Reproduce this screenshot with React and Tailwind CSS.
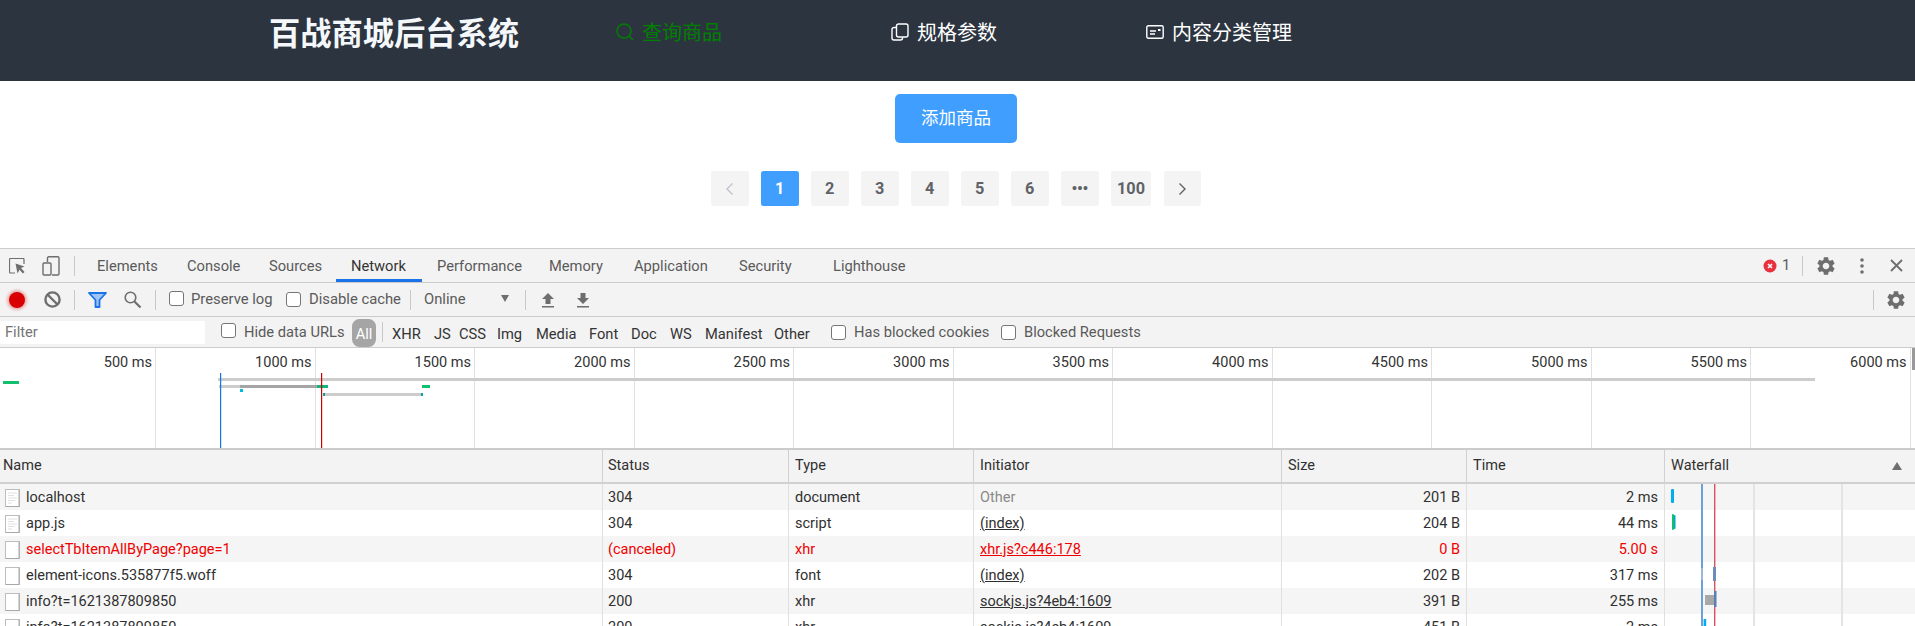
import { MdSettings } from 'react-icons/md';

const pages = ['1', '2', '3', '4', '5', '6'];
const scale = ['500 ms', '1000 ms', '1500 ms', '2000 ms', '2500 ms', '3000 ms', '3500 ms', '4000 ms', '4500 ms', '5000 ms', '5500 ms', '6000 ms'];
const rows = [
  { name: 'localhost', status: '304', type: 'document', init: 'Other', size: '201 B', time: '2 ms', lines: true },
  { name: 'app.js', status: '304', type: 'script', init: '(index)', size: '204 B', time: '44 ms', lines: true },
  { name: 'selectTbItemAllByPage?page=1', status: '(canceled)', type: 'xhr', init: 'xhr.js?c446:178', size: '0 B', time: '5.00 s', red: true },
  { name: 'element-icons.535877f5.woff', status: '304', type: 'font', init: '(index)', size: '202 B', time: '317 ms' },
  { name: 'info?t=1621387809850', status: '200', type: 'xhr', init: 'sockjs.js?4eb4:1609', size: '391 B', time: '255 ms' },
  { name: 'info?t=1621387809850', status: '200', type: 'xhr', init: 'sockjs.js?4eb4:1609', size: '451 B', time: '2 ms' },
];

const Sep = ({ className }) => <div className={`w-px h-[20px] bg-[#c8c8c8] shrink-0 ${className}`} />;
const Check = () => <input type="checkbox" readOnly className="appearance-none w-[15px] h-[15px] shrink-0 rounded-[3px] border border-[#767676] bg-white" />;
const Gear = ({ className }) => <MdSettings className={`text-[#6e6e6e] shrink-0 ${className}`} />;

function PageIcon({ lines }) {
  return (
    <svg width="15" height="18" viewBox="0 0 15 18" className="shrink-0">
      <rect x="0.5" y="0.5" width="14" height="17" fill="#fff" stroke="#bdbdbd" />
      <path d="M14 1v16.5H1" fill="none" stroke="#a8a8a8" strokeWidth="1" />
      {lines && <path d="M3 4h9M3 6.5h6M3 9h9M3 11.5h7M3 14h4" stroke="#e0e0e0" strokeWidth="1" />}
    </svg>
  );
}

function Nav() {
  return (
    <div className="h-[81px] bg-[#2c3440] flex items-center pb-[17px] pl-[269px] text-[20px] text-white font-['Noto_Sans_CJK_SC',sans-serif]">
      <div className="w-[347px] text-[31.25px] font-bold text-[#f5f8fb]">百战商城后台系统</div>
      <div className="w-[275px] flex items-center gap-[8px] text-[#008000]">
        <svg width="18" height="18" viewBox="0 0 18 18" fill="none" stroke="currentColor" strokeWidth="1.4">
          <circle cx="8" cy="8" r="7" /><path d="M13 13l4 4" />
        </svg>
        查询商品
      </div>
      <div className="w-[255px] flex items-center gap-[8px]">
        <svg width="18" height="18" viewBox="0 0 18 18" fill="none" stroke="currentColor" strokeWidth="1.4">
          <rect x="5.5" y="1" width="11.5" height="13" rx="2" />
          <path d="M5 4.5H3a2 2 0 0 0-2 2V15a2 2 0 0 0 2 2h6.5a2 2 0 0 0 2-2v-1" />
        </svg>
        规格参数
      </div>
      <div className="flex items-center gap-[8px]">
        <svg width="18" height="14" viewBox="0 0 18 14" fill="none" stroke="currentColor" strokeWidth="1.4">
          <rect x="0.8" y="0.8" width="16.4" height="12.4" rx="1.5" />
          <path d="M4 6h6M4 9h5" /><rect x="12" y="4" width="2.5" height="2" fill="currentColor" stroke="none" />
        </svg>
        内容分类管理
      </div>
    </div>
  );
}

function Content() {
  const cell = 'h-[35px] w-[37.5px] flex items-center justify-center rounded-[2.5px] bg-[#f4f4f5] text-[#606266] pt-[2px]';
  return (
    <div className="h-[167px] bg-white pr-[3px] font-['Noto_Sans_CJK_SC',sans-serif]">
      <div className="flex justify-center pt-[13px]">
        <button className="w-[122px] h-[49px] pb-[2px] rounded-[5px] bg-[#409eff] text-white text-[17.5px]">添加商品</button>
      </div>
      <div className="flex justify-center gap-[12.5px] mt-[28px] text-[16.25px] font-bold font-['Roboto',sans-serif]">
        <div className="h-[35px] w-[37.5px] flex items-center justify-center rounded-[2.5px] bg-[#f4f4f5] text-[#c0c4cc]">
          <svg width="9" height="14" viewBox="0 0 9 14" fill="none" stroke="currentColor" strokeWidth="1.4"><path d="M7.5 1.5L2 7l5.5 5.5" /></svg>
        </div>
        {pages.map((p) => (
          <div key={p} className={p === '1' ? 'h-[35px] w-[37.5px] flex items-center justify-center rounded-[2.5px] bg-[#409eff] text-white pt-[2px]' : cell}>{p}</div>
        ))}
        <div className={`${cell} tracking-tight`}>•••</div>
        <div className="h-[35px] w-[40px] flex items-center justify-center rounded-[2.5px] bg-[#f4f4f5] text-[#606266] pt-[2px]">100</div>
        <div className="h-[35px] w-[37.5px] flex items-center justify-center rounded-[2.5px] bg-[#f4f4f5] text-[#606266]">
          <svg width="9" height="14" viewBox="0 0 9 14" fill="none" stroke="currentColor" strokeWidth="1.4"><path d="M1.5 1.5L7 7l-5.5 5.5" /></svg>
        </div>
      </div>
    </div>
  );
}

function TabBar() {
  const tab = 'h-full flex items-center pl-[15px] border-b-[3px] border-transparent pt-[5px]';
  return (
    <div className="h-[34px] flex items-center pl-[9px] bg-[#f3f3f3] border-b border-[#cbcbcb] text-[14.7px] text-[#5a5a5a]">
      <svg width="16" height="16" viewBox="0 0 16 16" fill="none" className="shrink-0">
        <path d="M6 15H1.5a1 1 0 0 1-1-1V1.5a1 1 0 0 1 1-1H14a1 1 0 0 1 1 1V6" stroke="#6e6e6e" strokeWidth="1.2" />
        <path d="M6.5 5.5l9 3-3.5 1.6 3.5 3.9-1.6 1.6-3.4-3.9L8.5 15.5z" fill="#6e6e6e" />
      </svg>
      <svg width="18" height="20" viewBox="0 0 18 20" fill="none" className="ml-[17px] shrink-0" stroke="#6e6e6e" strokeWidth="1.4">
        <path d="M5.5 6V2a1.2 1.2 0 0 1 1.2-1.2h9.1A1.2 1.2 0 0 1 17 2v15.8a1.2 1.2 0 0 1-1.2 1.2H10" />
        <rect x="1" y="7" width="8" height="12" rx="1" />
      </svg>
      <Sep className="ml-[14px] mr-[7px]" />
      <div className={`${tab} w-[90px]`}>Elements</div>
      <div className={`${tab} w-[82px]`}>Console</div>
      <div className={`${tab} w-[82px]`}>Sources</div>
      <div className="h-full flex items-center pl-[15px] w-[86px] border-b-[3px] border-[#1a73e8] pt-[5px] text-[#333]">Network</div>
      <div className={`${tab} w-[112px]`}>Performance</div>
      <div className={`${tab} w-[85px]`}>Memory</div>
      <div className={`${tab} w-[105px]`}>Application</div>
      <div className={`${tab} w-[94px]`}>Security</div>
      <div className={`${tab} w-[100px]`}>Lighthouse</div>
      <div className="ml-auto flex items-center pr-[12px]">
        <svg width="14" height="14" viewBox="0 0 14 14" className="shrink-0">
          <circle cx="7" cy="7" r="6.5" fill="#e8303e" /><path d="M5 5l4 4M9 5l-4 4" stroke="#fff" strokeWidth="1.6" />
        </svg>
        <span className="ml-[5px] w-[20px]">1</span>
        <Sep />
        <Gear className="ml-[12px] w-[22px] h-[22px]" />
        <svg width="6" height="18" viewBox="0 0 6 18" className="ml-[22px] shrink-0" fill="#6e6e6e">
          <circle cx="3" cy="3" r="1.8" /><circle cx="3" cy="9" r="1.8" /><circle cx="3" cy="15" r="1.8" />
        </svg>
        <svg width="13" height="13" viewBox="0 0 13 13" className="ml-[25px] shrink-0" stroke="#6e6e6e" strokeWidth="1.8">
          <path d="M1 1l11 11M12 1L1 12" />
        </svg>
      </div>
    </div>
  );
}

function Toolbar() {
  return (
    <div className="h-[34px] flex items-center pl-[9px] pr-[8px] bg-[#f3f3f3] border-b border-[#cbcbcb] text-[14.8px] text-[#5a5a5a]">
      <div className="w-[16px] h-[16px] shrink-0 rounded-full bg-[#d80000] shadow-[0_0_3px_2px_rgba(216,0,0,0.3)]" />
      <svg width="17" height="17" viewBox="0 0 17 17" fill="none" stroke="#6e6e6e" strokeWidth="2.4" className="ml-[19px] shrink-0">
        <circle cx="8.5" cy="8.5" r="7.1" /><path d="M3.5 3.5l10 10" />
      </svg>
      <Sep className="ml-[13px]" />
      <svg width="19" height="16" viewBox="0 0 19 16" className="ml-[13px] shrink-0">
        <path d="M1 1h17l-6.5 7v7h-4V8z" fill="#9fc5f5" stroke="#1a73e8" strokeWidth="1.8" strokeLinejoin="round" />
      </svg>
      <svg width="18" height="17" viewBox="0 0 18 17" fill="none" stroke="#6e6e6e" strokeWidth="1.6" className="ml-[17px] shrink-0">
        <circle cx="6.5" cy="6.5" r="5.3" /><path d="M10.5 10.5l6 6" strokeWidth="2.2" />
      </svg>
      <Sep className="ml-[13px]" />
      <div className="ml-[13px]"><Check /></div>
      <span className="ml-[7px] w-[95px]">Preserve log</span>
      <Check />
      <span className="ml-[8px] w-[101px]">Disable cache</span>
      <Sep />
      <span className="ml-[13px] w-[77px]">Online</span>
      <div className="w-0 h-0 shrink-0 mb-[3px] border-x-[4.5px] border-x-transparent border-t-[7px] border-t-[#6e6e6e]" />
      <Sep className="ml-[16px]" />
      <svg width="14" height="16" viewBox="0 0 14 16" fill="#6e6e6e" className="ml-[15px] shrink-0">
        <path d="M7 1l6 6H9.5v5h-5V7H1zM1 14h12v1.5H1z" />
      </svg>
      <svg width="14" height="16" viewBox="0 0 14 16" fill="#6e6e6e" className="ml-[21px] shrink-0">
        <path d="M4.5 1h5v5H13l-6 6-6-6h3.5zM1 14h12v1.5H1z" />
      </svg>
      <Sep className="ml-auto mr-[11px]" />
      <Gear className="w-[22px] h-[22px]" />
    </div>
  );
}

function FilterBar() {
  return (
    <div className="h-[31px] flex items-center bg-[#f3f3f3] border-b border-[#cbcbcb] text-[14.7px] text-[#5a5a5a]">
      <input readOnly placeholder="Filter" className="w-[205px] h-[23px] bg-white pl-[5px] placeholder:text-[#757575] outline-none" />
      <div className="ml-[16px]"><Check /></div>
      <span className="ml-[8px] w-[108px] pt-[1px]">Hide data URLs</span>
      <div className="w-[24px] h-[28px] mt-[2px] rounded-[7.5px] bg-[#a5a5a5] text-white flex items-center justify-center pt-[3px]">All</div>
      <Sep className="ml-[6px] mr-[9px]" />
      <div className="flex items-center pt-[4px] text-[#333]">
        <span className="w-[42px]">XHR</span>
        <span className="w-[25px]">JS</span>
        <span className="w-[38px]">CSS</span>
        <span className="w-[39px]">Img</span>
        <span className="w-[53px]">Media</span>
        <span className="w-[42px]">Font</span>
        <span className="w-[39px]">Doc</span>
        <span className="w-[35px]">WS</span>
        <span className="w-[69px]">Manifest</span>
        <span className="w-[57px]">Other</span>
      </div>
      <Check />
      <span className="ml-[8px] w-[147px] pt-[1px]">Has blocked cookies</span>
      <Check />
      <span className="ml-[8px] pt-[1px]">Blocked Requests</span>
    </div>
  );
}

function Overview() {
  return (
    <div className="relative h-[100px] flex bg-white text-[14.5px] text-[#333] overflow-hidden">
      {scale.map((s, i) => (
        <div key={s} className={i === 0 ? 'w-[156px] shrink-0 border-r border-[#e0e0e0] text-right pr-[3px] pt-[8px]' : 'w-[159.5px] shrink-0 border-r border-[#e0e0e0] text-right pr-[3px] pt-[8px]'}>{s}</div>
      ))}
      <svg width="1915" height="100" viewBox="0 0 1915 100" className="absolute left-0 top-0">
        <rect x="218" y="30" width="1597" height="3" fill="#cccccc" />
        <rect x="3" y="33" width="16" height="3" fill="#10c06c" />
        <rect x="219" y="37" width="21" height="3" fill="#cccccc" />
        <rect x="240" y="37" width="77" height="3" fill="#a5a5a5" />
        <rect x="317" y="37" width="11" height="3" fill="#10b87a" />
        <rect x="422" y="37" width="8" height="3" fill="#10c06c" />
        <rect x="240" y="41" width="3" height="3" fill="#00b8d8" />
        <rect x="323" y="45" width="100" height="3" fill="#cccccc" />
        <rect x="323" y="45" width="2" height="3" fill="#10a090" />
        <rect x="421" y="45" width="2" height="3" fill="#10a0a0" />
        <rect x="220" y="25" width="1.2" height="75" fill="#1a73e8" />
        <rect x="321" y="25" width="1.2" height="75" fill="#d00000" />
        <rect x="1912" y="0" width="3" height="22" fill="#999999" />
      </svg>
    </div>
  );
}

function Table() {
  const cols = 'grid grid-cols-[603px_186px_185px_308px_185px_198px_1fr]';
  const head = 'h-full flex items-center pl-[6px] border-r border-[#d0d0d0]';
  return (
    <div className="relative h-[178px] overflow-hidden border-t-2 border-[#cbcbcb] text-[14.5px] text-[#303030]">
      <div className={`${cols} h-[34px] bg-[#f3f3f3] border-b-2 border-[#d0d0d0]`}>
        <div className="h-full flex items-center pl-[3px] border-r border-[#d0d0d0]">Name</div>
        <div className="h-full flex items-center pl-[5px] border-r border-[#d0d0d0]">Status</div>
        <div className={head}>Type</div>
        <div className={head}>Initiator</div>
        <div className={head}>Size</div>
        <div className={head}>Time</div>
        <div className="h-full flex items-center justify-between pl-[6px] pr-[13px]">
          Waterfall
          <div className="w-0 h-0 border-x-[5px] border-x-transparent border-b-[8px] border-b-[#6e6e6e]" />
        </div>
      </div>
      {rows.map((r, i) => {
        const cell = 'h-full flex items-center pl-[6px] pt-[2px] border-r border-[#e0e0e0]';
        const num = 'h-full flex items-center justify-end pr-[6px] pt-[2px] border-r border-[#e0e0e0]';
        return (
          <div key={i} className={`${cols} h-[26px] ${i % 2 === 0 ? 'bg-[#f5f5f5]' : 'bg-white'} ${r.red ? 'text-[#f00000]' : ''}`}>
            <div className="h-full flex items-center gap-[6px] pl-[5px] pt-[2px] border-r border-[#e0e0e0]">
              <PageIcon lines={r.lines} />
              <span>{r.name}</span>
            </div>
            <div className="h-full flex items-center pl-[5px] pt-[2px] border-r border-[#e0e0e0]">{r.status}</div>
            <div className={cell}>{r.type}</div>
            <div className={cell}>
              {r.init === 'Other' ? <span className="text-[#8a8a8a]">Other</span> : <span className="underline">{r.init}</span>}
            </div>
            <div className={num}>{r.size}</div>
            <div className={num}>{r.time}</div>
            <div />
          </div>
        );
      })}
      <svg width="250" height="142" viewBox="0 0 250 142" className="absolute right-0 top-[34px]">
        <rect x="88" y="0" width="2" height="142" fill="#e4e4e4" />
        <rect x="176" y="0" width="2" height="142" fill="#e4e4e4" />
        <rect x="36" y="0" width="2" height="142" fill="#6f9fd8" />
        <rect x="49" y="0" width="1.4" height="142" fill="#d9545a" />
        <rect x="6" y="5" width="3" height="14" rx="1" fill="#00aeef" />
        <rect x="7" y="30" width="2" height="16" rx="1" fill="#10c06c" />
        <rect x="9" y="31" width="1.5" height="14" rx="0.7" fill="#00a8c0" />
        <rect x="36" y="84" width="2" height="12" fill="#9cb8dc" />
        <rect x="48" y="83" width="3" height="14" fill="#6f8cb8" />
        <rect x="40" y="111" width="10" height="10" fill="#a8a8a8" />
        <rect x="49" y="107" width="2.5" height="16" fill="#5b7fb5" />
        <rect x="38.6" y="135" width="2.6" height="7" fill="#00aeef" />
      </svg>
    </div>
  );
}

export default function App() {
  return (
    <div className="w-[1915px] h-[626px] overflow-hidden bg-white">
      <Nav />
      <Content />
      <div className="border-t border-[#cbcbcb] leading-none font-['Roboto',sans-serif]">
        <TabBar />
        <Toolbar />
        <FilterBar />
        <Overview />
        <Table />
      </div>
    </div>
  );
}
